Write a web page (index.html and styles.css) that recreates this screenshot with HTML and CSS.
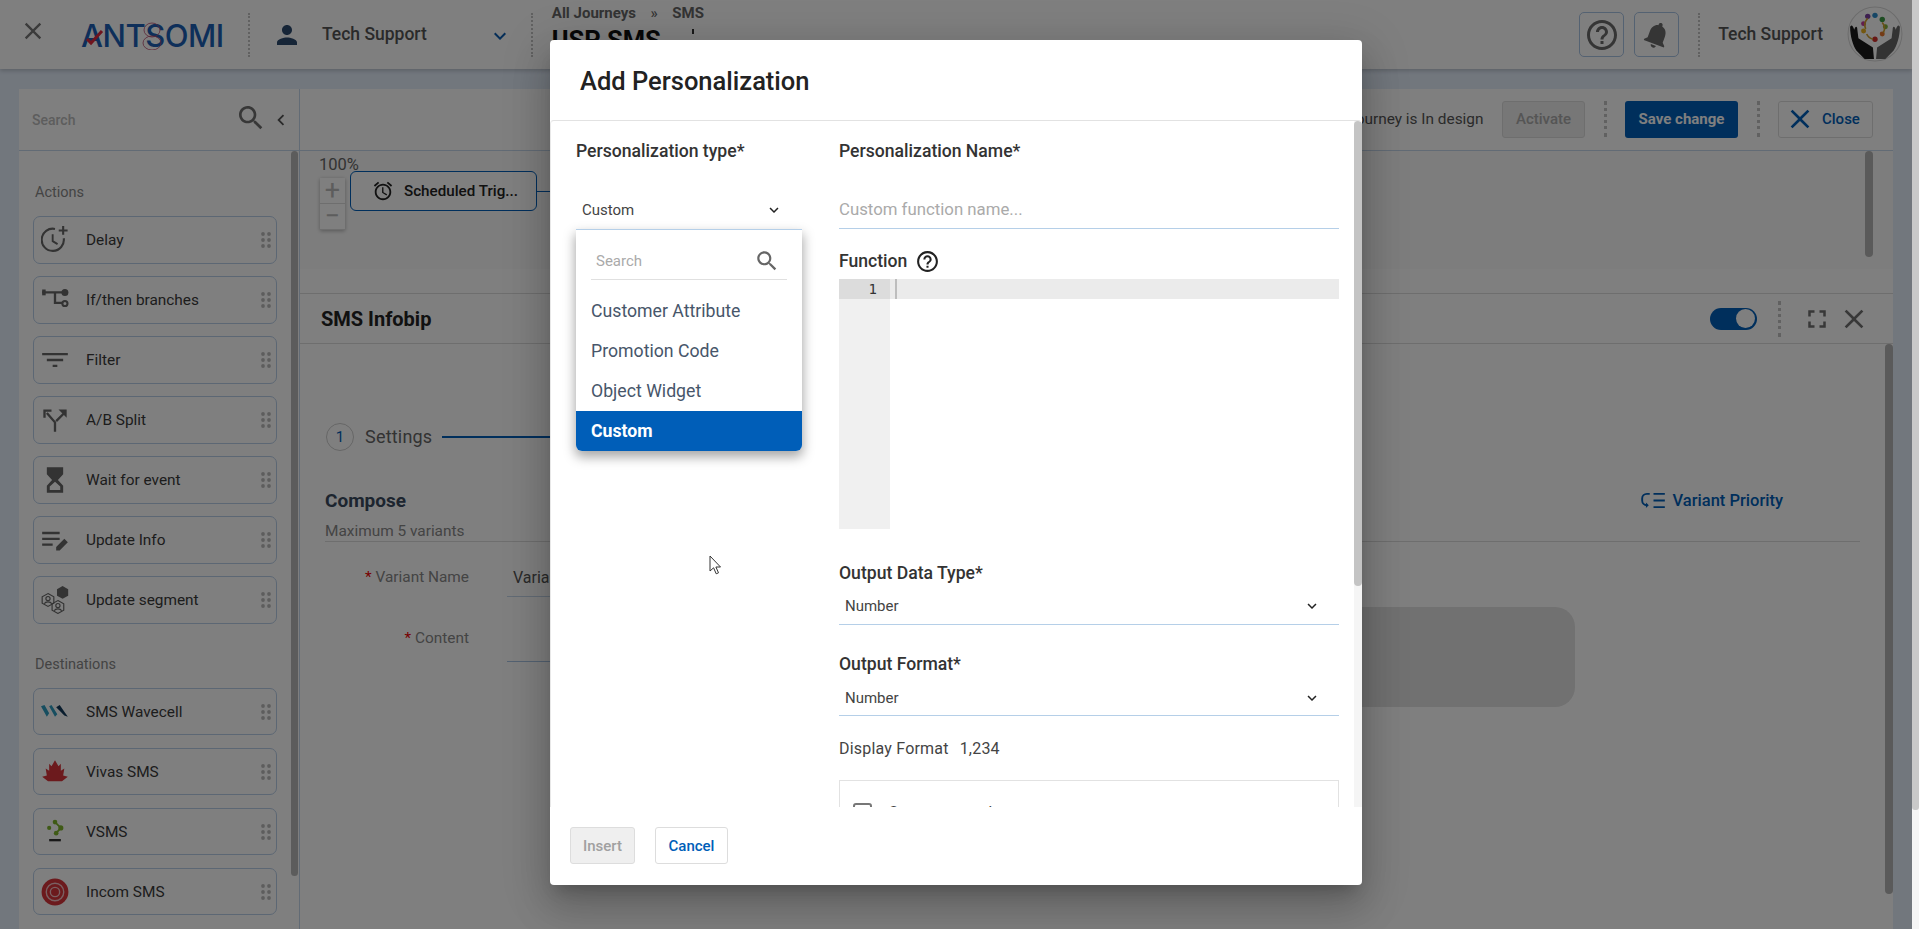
FILE: index.html
```html
<!DOCTYPE html>
<html lang="en">
<head>
  <meta charset="UTF-8" />
  <meta name="viewport" content="width=device-width, initial-scale=1.0" />
  <title>Add Personalization</title>
  <link rel="stylesheet" href="styles.css">
</head>
<body>
  <svg class="defs" aria-hidden="true">
    <symbol id="i-close" viewBox="0 0 24 24"><path d="M19 6.41L17.59 5 12 10.59 6.41 5 5 6.41 10.59 12 5 17.59 6.41 19 12 13.41 17.59 19 19 17.59 13.41 12z"/></symbol>
    <symbol id="i-chevron" viewBox="0 0 24 24"><path d="M16.59 8.59L12 13.17 7.41 8.59 6 10l6 6 6-6z"/></symbol>
    <symbol id="i-search" viewBox="0 0 24 24"><path d="M15.5 14h-.79l-.28-.27C15.41 12.59 16 11.11 16 9.5 16 5.91 13.09 3 9.5 3S3 5.91 3 9.5 5.91 16 9.5 16c1.61 0 3.09-.59 4.23-1.57l.27.28v.79l5 4.99L20.49 19l-4.99-5zm-6 0C7.01 14 5 11.99 5 9.5S7.01 5 9.5 5 14 7.01 14 9.5 11.99 14 9.5 14z"/></symbol>
    <symbol id="i-help" viewBox="0 0 24 24"><path d="M11 18h2v-2h-2v2zm1-16C6.48 2 2 6.48 2 12s4.48 10 10 10 10-4.48 10-10S17.52 2 12 2zm0 18c-4.41 0-8-3.59-8-8s3.59-8 8-8 8 3.59 8 8-3.59 8-8 8zm0-14c-2.21 0-4 1.79-4 4h2c0-1.1.9-2 2-2s2 .9 2 2c0 2-3 1.75-3 5h2c0-2.25 3-2.5 3-5 0-2.21-1.79-4-4-4z"/></symbol>
    <symbol id="i-grip" viewBox="0 0 10 16"><circle cx="2" cy="2" r="1.9"/><circle cx="8" cy="2" r="1.9"/><circle cx="2" cy="8" r="1.9"/><circle cx="8" cy="8" r="1.9"/><circle cx="2" cy="14" r="1.9"/><circle cx="8" cy="14" r="1.9"/></symbol>
  </svg>

  <div class="page">
    <div class="app">
      <header class="topbar">
        <svg class="top-close"><use href="#i-close"/></svg>
        <div class="logo">
          <span class="logo-word">ANTSOMI</span>
          <svg class="logo-mark" viewBox="0 0 142 28">
            <path d="M6 17l4 4 11-12" fill="none" stroke="#e0283c" stroke-width="3"/>
            <ellipse cx="71" cy="8" rx="8" ry="7" fill="none" stroke="#b84a6c" stroke-width="0.8"/>
            <ellipse cx="71" cy="21" rx="9" ry="7" fill="none" stroke="#b84a6c" stroke-width="0.8"/>
          </svg>
        </div>
        <div class="dots dots-first"></div>
        <svg class="person" viewBox="0 0 24 24"><path d="M12 12c2.21 0 4-1.79 4-4s-1.79-4-4-4-4 1.79-4 4 1.79 4 4 4zm0 2c-2.67 0-8 1.34-8 4v2h16v-2c0-2.66-5.33-4-8-4z"/></svg>
        <span class="account">Tech Support</span>
        <svg class="account-arrow"><use href="#i-chevron"/></svg>
        <div class="dots dots-second"></div>
        <div class="crumbs">
          <div class="crumb-line"><span>All Journeys</span><span class="crumb-sep">»</span><span>SMS</span></div>
          <div class="journey-name">USP SMS<span class="journey-tick"></span></div>
        </div>
        <div class="top-right">
          <button class="round-btn"><svg class="help-big"><use href="#i-help"/></svg></button>
          <button class="round-btn">
            <svg class="bell" viewBox="0 0 24 24"><path transform="rotate(20 12 12)" d="M12 22c1.1 0 2-.9 2-2h-4c0 1.1.9 2 2 2zm6-6v-5c0-3.07-1.63-5.64-4.5-6.32V4c0-.83-.67-1.5-1.5-1.5s-1.5.67-1.5 1.5v.68C7.64 5.36 6 7.92 6 11v5l-2 2v1h16v-1l-2-2z"/></svg>
          </button>
          <div class="dots dots-third"></div>
          <span class="account account-right">Tech Support</span>
          <svg class="avatar" viewBox="0 0 54 54">
            <circle cx="27" cy="27" r="26" fill="#fff" stroke="#d8d8d8"/>
            <circle cx="27" cy="9" r="2.6" fill="#2d8ccb"/>
            <circle cx="20" cy="10" r="2.6" fill="#7a3fa0"/>
            <circle cx="34" cy="13" r="2.6" fill="#3d9a46"/>
            <circle cx="37" cy="20" r="2.4" fill="#7eb23c"/>
            <circle cx="16" cy="17" r="2.4" fill="#c33c9c"/>
            <circle cx="16" cy="24" r="2.4" fill="#e8b020"/>
            <circle cx="34" cy="27" r="2.4" fill="#e8762c"/>
            <circle cx="27" cy="32" r="2.6" fill="#d0302c"/>
            <path d="M20 12a9 9 0 0 0 -2 10M34 16a9 9 0 0 1 1 10M19 27a9 9 0 0 0 6 5" fill="none" stroke="#d0a030" stroke-width="1.6"/>
            <path d="M3 20c2-3 3 0 4 3 1-4 3-4 3 0l1 8 14 9 1 11-9 0-8-8C6 38 3 30 3 20z" fill="#1a1a1a"/>
            <path d="M51 20c-2-3-3 0-4 3-1-4-3-4-3 0l-1 8-14 9-1 11 9 0 8-8C48 38 51 30 51 20z" fill="#666"/>
          </svg>
        </div>
      </header>

      <main class="board">
        <aside class="sidebar">
          <div class="side-search">
            <span class="side-search-text">Search</span>
            <svg class="side-search-icon"><use href="#i-search"/></svg>
            <svg class="side-collapse" viewBox="0 0 24 24"><path d="M15.41 7.41L14 6l-6 6 6 6 1.41-1.41L10.83 12z"/></svg>
          </div>
          <div class="side-body">
            <div class="side-list">
              <div class="side-heading">Actions</div>
              <div class="node-item">
                <svg class="node-icon" viewBox="0 0 24 24"><path d="M19.500 10.500a9.500 9.500 0 1 1-7.500-8" fill="none" stroke-width="1.800"/><path d="M10 7v6l4.200 2.500" fill="none" stroke-width="1.600"/><path d="M19 0v7.500M15.200 3.800h7.600" fill="none" stroke-width="1.800"/></svg>
                <span>Delay</span><svg class="grip"><use href="#i-grip"/></svg>
              </div>
              <div class="node-item">
                <svg class="node-icon" viewBox="0 0 24 24"><path d="M1 5.500h20M12 6v8.500h6" fill="none" stroke-width="2"/><path d="M1 3h3v5H1z"/><circle cx="20.500" cy="5.500" r="3"/><circle cx="20.500" cy="15" r="2.200" fill="none" stroke-width="1.800"/></svg>
                <span>If/then branches</span><svg class="grip"><use href="#i-grip"/></svg>
              </div>
              <div class="node-item">
                <svg class="node-icon" viewBox="0 0 24 24"><path d="M10 18h4v-2h-4v2zM1 6v2h22V6H1zm4 7h14v-2H5v2z"/></svg>
                <span>Filter</span><svg class="grip"><use href="#i-grip"/></svg>
              </div>
              <div class="node-item">
                <svg class="node-icon" viewBox="0 0 24 24"><path d="M12 22v-8L5 6M13 13l7-7" fill="none" stroke-width="2"/><path d="M2 3h7v2H4v5H2zM22 3h-7l7 7z"/></svg>
                <span>A/B Split</span><svg class="grip"><use href="#i-grip"/></svg>
              </div>
              <div class="node-item">
                <svg class="node-icon" viewBox="0 0 24 24"><path d="M5 1v6h.01L5 7.010 9.500 12 5 17v6h14v-6l-4.500-5L19 7.010 19 7V1H5zm11.500 16.500V20.500h-9v-3l4.500-4 4.500 4z"/></svg>
                <span>Wait for event</span><svg class="grip"><use href="#i-grip"/></svg>
              </div>
              <div class="node-item">
                <svg class="node-icon" viewBox="0 0 24 24"><path d="M1 5h15v2H1zM1 10h15v2H1zM1 15h9v2H1zM13 21v-3l7-7 3 3-7 7z"/></svg>
                <span>Update Info</span><svg class="grip"><use href="#i-grip"/></svg>
              </div>
              <div class="node-item node-last">
                <svg class="node-icon" viewBox="0 0 24 24"><path d="M18.500 0l4.800 2.800v5.600L18.500 11l-4.800-2.600V2.800z"/><path d="M6 6.500l5 2.800v5.400L6 17.500l-5-2.800V9.300z" fill="none" stroke-width="1"/><path d="M14.500 12.500l5 2.800v5.400l-5 2.800-5-2.800v-5.400z" fill="none" stroke-width="1"/><circle cx="6" cy="10.800" r="1.800" fill="none" stroke-width="1"/><path d="M2.800 15.200c1-2.200 5.400-2.200 6.400 0" fill="none" stroke-width="1"/><circle cx="14.500" cy="16.800" r="1.800" fill="none" stroke-width="1"/><path d="M11.300 21.200c1-2.200 5.400-2.200 6.400 0" fill="none" stroke-width="1"/></svg>
                <span>Update segment</span><svg class="grip"><use href="#i-grip"/></svg>
              </div>

              <div class="side-heading">Destinations</div>
              <div class="node-item dest-item">
                <svg class="node-icon" viewBox="0 0 24 24"><path d="M0 7l3-1 4 7-2 3zM7 7l2-1 5 8-2 2z" fill="#2f9dc0" stroke="none"/><path d="M13 8l3-2 7 10-3-1z" fill="#123a5c" stroke="none"/></svg>
                <span>SMS Wavecell</span><svg class="grip"><use href="#i-grip"/></svg>
              </div>
              <div class="node-item dest-item">
                <svg class="node-icon" viewBox="0 0 24 24"><path d="M12 2l3 5 2-2 0 6 3-2-1 6 4 1-5 4H6l-5-4 4-1-1-6 3 2 0-6 2 2z" fill="#d8343a" stroke="none"/><path d="M4 21c5-2 11-2 16 0" fill="none" stroke="#d8343a"/></svg>
                <span>Vivas SMS</span><svg class="grip"><use href="#i-grip"/></svg>
              </div>
              <div class="node-item dest-item">
                <svg class="node-icon" viewBox="0 0 24 24"><path d="M12 3.500L17 8.500 13 13" fill="none" stroke="#7eb42c" stroke-width="1.500"/><g fill="#7eb42c" stroke="none"><circle cx="12" cy="3.500" r="2"/><circle cx="17" cy="8.500" r="2.200"/><circle cx="7" cy="8.500" r="1.800"/><circle cx="13" cy="13" r="2"/><rect x="7" y="18" width="10" height="2" fill="#333"/></g></svg>
                <span>VSMS</span><svg class="grip"><use href="#i-grip"/></svg>
              </div>
              <div class="node-item dest-item">
                <svg class="node-icon" viewBox="0 0 24 24"><circle cx="12" cy="12" r="11.500" fill="#d8343a" stroke="none"/><circle cx="12" cy="12" r="7.500" fill="none" stroke="#f4c0c4" stroke-width="1.200"/><circle cx="12" cy="12" r="4" fill="none" stroke="#f4c0c4" stroke-width="1.200"/></svg>
                <span>Incom SMS</span><svg class="grip"><use href="#i-grip"/></svg>
              </div>
            </div>
            <div class="side-thumb"></div>
          </div>
        </aside>

        <section class="work">
          <div class="toolbar">
            <span class="journey-status">Journey is In design</span>
            <button class="tool-btn btn-off">Activate</button>
            <div class="dots dots-tool"></div>
            <button class="tool-btn btn-save">Save change</button>
            <div class="dots dots-tool"></div>
            <button class="tool-btn btn-close"><svg class="close-x"><use href="#i-close"/></svg>Close</button>
          </div>

          <div class="canvas">
            <span class="zoom-value">100%</span>
            <div class="zoom-box">
              <div class="zoom-cell">+</div>
              <div class="zoom-cell">−</div>
            </div>
            <div class="flow-node">
              <svg class="alarm" viewBox="0 0 24 24"><path d="M22 5.720l-4.600-3.860-1.290 1.530 4.600 3.860L22 5.720zM7.880 3.390L6.600 1.860 2 5.710l1.290 1.530 4.590-3.850zM12.500 8H11v6l4.750 2.850.75-1.230-4-2.370V8zM12 4c-4.970 0-9 4.030-9 9s4.020 9 9 9c4.970 0 9-4.030 9-9s-4.030-9-9-9zm0 16c-3.870 0-7-3.130-7-7s3.130-7 7-7 7 3.130 7 7-3.130 7-7 7z"/></svg>
              <span>Scheduled Trig...</span>
            </div>
            <div class="flow-link"></div>
            <div class="canvas-thumb"></div>
          </div>

          <div class="section-gap"></div>

          <div class="detail-head">
            <span class="detail-title">SMS Infobip</span>
            <div class="switch"><div class="switch-knob"></div></div>
            <div class="dots dots-detail"></div>
            <svg class="detail-icon" viewBox="0 0 24 24"><path d="M7 14H5v5h5v-2H7v-3zm-2-4h2V7h3V5H5v5zm12 7h-3v2h5v-5h-2v3zM14 5v2h3v3h2V5h-5z"/></svg>
            <svg class="detail-icon detail-x"><use href="#i-close"/></svg>
          </div>

          <div class="detail-wrap">
            <div class="detail-body">
              <div class="stepper">
                <span class="step-num">1</span>
                <span class="step-name">Settings</span>
                <div class="step-line"></div>
              </div>
              <div class="compose-row">
                <span class="compose-title">Compose</span>
                <span class="priority">
                  <svg class="priority-icon" viewBox="0 0 26 18"><path d="M9 2H6a5 5 0 0 0-5 5v2a5 5 0 0 0 5 5" fill="none" stroke="#005eb8" stroke-width="2"/><path d="M5 11v6l3-3z" fill="#005eb8"/><path d="M13 2h12M13 9h12M13 16h12" stroke="#005eb8" stroke-width="2"/></svg>
                  Variant Priority
                </span>
              </div>
              <div class="compose-note">Maximum 5 variants</div>
              <div class="compose-form">
                <div class="form-fields">
                  <div class="form-row">
                    <label class="form-label"><span class="req">*</span> Variant Name</label>
                    <div class="form-input">Variant 1</div>
                  </div>
                  <div class="form-row form-row-content">
                    <label class="form-label"><span class="req">*</span> Content</label>
                    <div class="form-input form-input-tall"></div>
                  </div>
                </div>
                <div class="preview"></div>
              </div>
            </div>
            <div class="detail-thumb"></div>
          </div>
        </section>
      </main>
    </div>

    <div class="backdrop"></div>

    <div class="modal">
      <div class="modal-head">Add Personalization</div>
      <div class="modal-body">
        <div class="col-type">
          <div class="field-label">Personalization type*</div>
          <div class="select select-type">
            <span>Custom</span>
            <svg class="select-arrow"><use href="#i-chevron"/></svg>
          </div>
          <div class="dropdown">
            <div class="drop-search">
              <span>Search</span>
              <svg class="drop-search-icon"><use href="#i-search"/></svg>
            </div>
            <div class="drop-list">
              <div class="drop-item">Customer Attribute</div>
              <div class="drop-item">Promotion Code</div>
              <div class="drop-item">Object Widget</div>
              <div class="drop-item drop-active">Custom</div>
            </div>
          </div>
        </div>

        <div class="col-form">
          <div class="field-label">Personalization Name*</div>
          <div class="name-input">Custom function name...</div>
          <div class="function-label">
            <span class="field-label">Function</span>
            <svg class="help-small"><use href="#i-help"/></svg>
          </div>
          <div class="editor">
            <div class="gutter"><div class="gutter-line">1</div></div>
            <div class="code"><div class="code-line"><div class="caret"></div></div></div>
          </div>
          <div class="field-label label-output">Output Data Type*</div>
          <div class="select select-output">
            <span>Number</span>
            <svg class="select-arrow"><use href="#i-chevron"/></svg>
          </div>
          <div class="field-label label-format">Output Format*</div>
          <div class="select select-format">
            <span>Number</span>
            <svg class="select-arrow"><use href="#i-chevron"/></svg>
          </div>
          <div class="display-format"><span>Display Format</span><span>1,234</span></div>
          <div class="format-box">
            <div class="check"></div>
            <span>Compact number</span>
          </div>
        </div>

        <div class="modal-scroll"><div class="modal-thumb"></div></div>
      </div>
      <div class="modal-foot">
        <button class="foot-btn foot-insert">Insert</button>
        <button class="foot-btn foot-cancel">Cancel</button>
      </div>
    </div>

    <svg class="pointer" viewBox="0 0 12 20"><path d="M1 1v15l3.600-3.200 2.600 6 2.300-1-2.600-5.800h4.600z" fill="#fff" stroke="#333" stroke-width="1"/></svg>
  </div>

  <div class="page-scroll"><div class="page-thumb"></div></div>
</body>
</html>
```

FILE: styles.css
```css
* {
  box-sizing: border-box;
}
html, body {
  margin: 0;
  height: 929px;
  overflow: hidden;
}
body {
  display: flex;
  font-family: Roboto, "Liberation Sans", sans-serif;
  font-size: 15.4px;
  color: #333;
  background: #fff;
}
button {
  font-family: inherit;
}
.defs {
  position: absolute;
  width: 0;
  height: 0;
}
.page {
  position: relative;
  width: 1912px;
  height: 929px;
  overflow: hidden;
}
.app {
  height: 929px;
  background: #e4eefb;
}
.backdrop {
  position: absolute;
  inset: 0;
  background: rgba(0, 0, 0, 0.5);
}

/* page scrollbar is not covered by the backdrop */
.page-scroll {
  width: 7px;
  height: 929px;
  background: #f5f5f5;
}
.page-thumb {
  height: 810px;
  background: #c9c9c9;
  border-radius: 0 0 3px 3px;
}

/* top bar */
.topbar {
  display: flex;
  align-items: center;
  height: 69px;
  background: #fff;
  box-shadow: 0 2px 4px rgba(0, 0, 0, 0.18);
  position: relative;
}
.top-close {
  width: 28px;
  height: 28px;
  margin: 0 0 7px 19px;
  fill: #777;
}
.logo {
  position: relative;
  width: 143px;
  height: 28px;
  margin: 2px 0 0 34px;
}
.logo-word {
  display: block;
  font-family: Inter, Roboto, sans-serif;
  font-size: 31px;
  font-weight: 500;
  line-height: 28px;
  letter-spacing: -0.5px;
  color: #1d5fb4;
  white-space: nowrap;
}
.logo-mark {
  position: absolute;
  top: 0;
  left: 0;
  width: 142px;
  height: 28px;
}
.dots {
  border-left: 2px dotted #c2c2c2;
}
.dots-first {
  height: 44px;
  margin-left: 24px;
}
.person {
  width: 30px;
  height: 30px;
  margin-left: 22px;
  fill: #2c4a6e;
}
.account {
  margin: 0 0 2px 20px;
  font-size: 17.5px;
  font-weight: 500;
  color: #555;
}
.account-arrow {
  width: 24px;
  height: 24px;
  margin: 3px 0 0 61px;
  fill: #0a5cb0;
}
.dots-second {
  height: 44px;
  margin-left: 19px;
}
.crumbs {
  margin: 4px 0 0 19px;
  align-self: flex-start;
}
.crumb-line {
  display: flex;
  font-size: 15px;
  font-weight: 700;
  line-height: 18px;
  color: #666;
}
.crumb-sep {
  margin: 0 14.5px;
  font-weight: 500;
}
.journey-name {
  display: flex;
  margin-top: 3px;
  font-size: 25.5px;
  font-weight: 700;
  line-height: 30px;
  color: #111;
}
.journey-tick {
  width: 2px;
  height: 5px;
  margin: 4px 0 0 31px;
  background: #333;
}
.top-right {
  display: flex;
  align-items: center;
  margin-left: auto;
}
.round-btn {
  display: flex;
  align-items: center;
  justify-content: center;
  width: 45px;
  height: 45px;
  margin-right: 10px;
  padding: 0;
  background: #fff;
  border: 1px solid #a9c4e4;
  border-radius: 5px;
}
.help-big {
  width: 36px;
  height: 36px;
  fill: #6a6a6a;
}
.bell {
  width: 32px;
  height: 32px;
  fill: #6a6a6a;
}
.dots-third {
  height: 44px;
  margin-left: 9px;
}
.account-right {
  margin-left: 18px;
}
.avatar {
  width: 56px;
  height: 56px;
  margin: 0 9px 1px 24px;
}

/* board */
.board {
  display: flex;
  height: 840px;
  margin: 20px 19px 0;
  background: #fff;
}
.sidebar {
  width: 281px;
  flex: none;
  border-right: 1px solid #c5d6ea;
}
.side-search {
  display: flex;
  align-items: center;
  height: 62px;
  padding: 0 0 0 13px;
  border-bottom: 1px solid #c5d6ea;
}
.side-search-text {
  flex: 1;
  font-size: 14px;
  font-weight: 500;
  color: #bbb;
}
.side-search-icon {
  width: 32px;
  height: 32px;
  margin-bottom: 4px;
  fill: #6e6e6e;
}
.side-collapse {
  width: 22px;
  height: 22px;
  margin: 0 7px 0 3px;
  fill: #555;
}
.side-body {
  display: flex;
}
.side-list {
  width: 272px;
  height: 778px;
  padding: 32px 0 0 14px;
  overflow: hidden;
}
.side-heading {
  height: 20px;
  margin-bottom: 13px;
  padding-left: 2px;
  line-height: 20px;
  font-size: 14.5px;
  color: #888;
}
.node-item {
  display: flex;
  align-items: center;
  width: 244px;
  height: 48px;
  margin-bottom: 12px;
  padding: 0 5px 0 7px;
  border: 1px solid #b9cee8;
  border-radius: 7px;
  color: #3a3a3a;
}
.node-item span {
  flex: 1;
}
.node-last {
  margin-bottom: 31px;
}
.dest-item {
  height: 47px;
  margin-bottom: 13px;
}
.node-icon {
  width: 28px;
  height: 28px;
  margin-right: 17px;
  fill: #666;
  stroke: #666;
  stroke-width: 0;
}
.grip {
  width: 10px;
  height: 16px;
  fill: #bbb;
}
.side-thumb {
  width: 7px;
  height: 725px;
  background: #b8b8b8;
  border-radius: 4px;
}

/* work area */
.work {
  flex: 1;
  min-width: 0;
}
.toolbar {
  display: flex;
  align-items: center;
  justify-content: flex-end;
  height: 62px;
  padding: 0 20px 1px 0;
  gap: 18.5px;
  border-bottom: 1px solid #c5d6ea;
}
.journey-status {
  color: #555;
}
.tool-btn {
  height: 37px;
  padding: 0;
  border-radius: 3px;
  font-size: 15px;
  font-weight: 500;
}
.btn-off {
  width: 83px;
  background: #eee;
  border: 1px solid #ddd;
  color: #aaa;
}
.btn-save {
  width: 113px;
  background: #005eb8;
  border: 0;
  font-weight: 700;
  color: #fff;
}
.btn-close {
  display: flex;
  align-items: center;
  width: 95px;
  padding-left: 5px;
  background: #fff;
  border: 1px solid #ddd;
  color: #005eb8;
}
.close-x {
  width: 32px;
  height: 32px;
  margin-right: 6px;
  fill: #005eb8;
}
.dots-tool {
  height: 36px;
  border-left-width: 3px;
}
.canvas {
  position: relative;
  height: 118px;
  background: #fbfbfb;
}
.zoom-value {
  position: absolute;
  top: 4px;
  left: 19px;
  font-size: 16.5px;
  color: #666;
}
.zoom-box {
  position: absolute;
  top: 27px;
  left: 20px;
  width: 25px;
  background: #fff;
  box-shadow: 0 1px 4px rgba(0, 0, 0, 0.3);
}
.zoom-cell {
  height: 26px;
  border-bottom: 1px solid #ddd;
  font-size: 27px;
  line-height: 25px;
  text-align: center;
  color: #bbb;
}
.flow-node {
  position: absolute;
  top: 20px;
  left: 50px;
  display: flex;
  align-items: center;
  width: 187px;
  height: 40px;
  padding-left: 21px;
  background: #fff;
  border: 1px solid #005eb8;
  border-radius: 6px;
  font-size: 15.2px;
  font-weight: 500;
  color: #222;
}
.alarm {
  width: 22px;
  height: 22px;
  margin-right: 10px;
  fill: #222;
}
.flow-link {
  position: absolute;
  top: 40px;
  left: 237px;
  width: 60px;
  border-top: 1px solid #005eb8;
}
.canvas-thumb {
  position: absolute;
  top: 0;
  left: 1565px;
  width: 8px;
  height: 106px;
  background: #b4b4b4;
  border-radius: 4px;
}
.section-gap {
  height: 24px;
  background: #fff;
}
.detail-head {
  display: flex;
  align-items: center;
  height: 51px;
  padding-left: 21px;
  border-top: 1px solid #ddd;
  border-bottom: 1px solid #ddd;
}
.detail-title {
  flex: 1;
  font-size: 20px;
  font-weight: 700;
  color: #222;
}
.switch {
  display: flex;
  justify-content: flex-end;
  align-items: center;
  width: 47px;
  height: 22px;
  padding-right: 2px;
  background: #005eb8;
  border-radius: 11px;
}
.switch-knob {
  width: 19px;
  height: 19px;
  background: #fff;
  border-radius: 50%;
}
.dots-detail {
  height: 36px;
  margin-left: 21px;
  border-left-width: 3px;
}
.detail-icon {
  width: 30px;
  height: 30px;
  margin-left: 21px;
  fill: #707070;
}
.detail-x {
  width: 32px;
  height: 32px;
  margin: 0 23px 0 6px;
}
.detail-wrap {
  display: flex;
  height: 550px;
}
.detail-body {
  flex: 1;
  min-width: 0;
  padding: 78px 0 0 25px;
}
.detail-thumb {
  width: 8px;
  height: 550px;
  background: #b4b4b4;
  border-radius: 4px;
}
.stepper {
  display: flex;
  align-items: center;
  height: 29px;
}
.step-num {
  width: 28px;
  height: 28px;
  margin-left: 1px;
  border: 1px solid #ccc;
  border-radius: 50%;
  line-height: 26px;
  font-size: 15px;
  text-align: center;
  color: #005eb8;
}
.step-name {
  margin: 0 10px 0 11px;
  font-size: 18px;
  letter-spacing: 0.2px;
  color: #666;
}
.step-line {
  width: 300px;
  border-top: 2px solid #005eb8;
}
.compose-row {
  display: flex;
  justify-content: space-between;
  align-items: center;
  height: 24px;
  margin-top: 37px;
  padding-right: 102px;
}
.compose-title {
  font-size: 19px;
  font-weight: 700;
  color: #3a4a5e;
}
.priority {
  display: flex;
  align-items: center;
  font-size: 16.5px;
  font-weight: 500;
  color: #005eb8;
}
.priority-icon {
  width: 25px;
  height: 17px;
  margin-right: 7px;
}
.compose-note {
  height: 30px;
  margin-right: 25px;
  padding-top: 10px;
  border-bottom: 1px solid #ddd;
  line-height: 19px;
  color: #888;
}
.compose-form {
  display: flex;
}
.form-fields {
  width: 800px;
  padding-top: 19px;
}
.form-row {
  display: flex;
}
.form-row-content {
  margin-top: 25px;
}
.form-label {
  width: 144px;
  height: 32px;
  line-height: 32px;
  text-align: right;
  color: #888;
}
.req {
  color: #e00;
}
.form-input {
  width: 600px;
  height: 36px;
  margin-left: 38px;
  padding: 7px 0 0 6px;
  border-bottom: 1px solid #c5d6ea;
  font-size: 16px;
  color: #555;
}
.form-input-tall {
  height: 40px;
  border-bottom-color: #a9c4e4;
}
.preview {
  width: 375px;
  height: 100px;
  margin: 65px 0 0 75px;
  background: #e2e2e2;
  border-radius: 20px;
}

/* modal */
.modal {
  position: absolute;
  top: 40px;
  left: 550px;
  display: flex;
  flex-direction: column;
  width: 812px;
  height: 845px;
  background: #fff;
  border-radius: 4px;
  box-shadow: 0 11px 15px -7px rgba(0, 0, 0, 0.2), 0 24px 38px 3px rgba(0, 0, 0, 0.14), 0 9px 46px 8px rgba(0, 0, 0, 0.12);
}
.modal-head {
  height: 80px;
  padding: 27px 0 0 30px;
  font-size: 25.5px;
  font-weight: 500;
  line-height: 28px;
  color: #222;
}
.modal-body {
  position: relative;
  display: flex;
  height: 687px;
  overflow: hidden;
  border-top: 1px solid #e2e2e2;
  border-left: 1px solid #e8e8e8;
  border-radius: 4px 4px 0 0;
}
.col-type {
  width: 226px;
  margin-left: 25px;
  padding-top: 20px;
}
.col-form {
  width: 500px;
  margin-left: 37px;
  padding-top: 20px;
}
.field-label {
  height: 20px;
  font-size: 17.6px;
  font-weight: 500;
  line-height: 20px;
  color: #333;
}
.select {
  position: relative;
  display: flex;
  align-items: center;
  justify-content: space-between;
  border-bottom: 1px solid #b5cfe8;
  font-size: 15px;
  color: #444;
}
.select-type {
  height: 39px;
  margin-top: 30px;
  padding: 0 19px 0 6px;
}
.select-output {
  height: 38px;
  margin-top: 4px;
  padding: 0 18px 0 6px;
}
.select-format {
  height: 36px;
  margin-top: 6px;
  padding: 0 18px 0 6px;
}
.select-arrow {
  width: 18px;
  height: 18px;
  fill: #222;
}
.dropdown {
  background: #fff;
  border-radius: 0 0 6px 6px;
  box-shadow: 0 5px 12px 1px rgba(0, 0, 0, 0.35);
}
.drop-search {
  display: flex;
  align-items: center;
  justify-content: space-between;
  height: 50px;
  margin: 0 15px;
  padding: 12px 7px 0 5px;
  border-bottom: 1px solid #e0e0e0;
  font-size: 15px;
  color: #aaa;
}
.drop-search-icon {
  width: 26px;
  height: 26px;
  fill: #666;
}
.drop-list {
  margin-top: 11px;
}
.drop-item {
  height: 40px;
  padding-left: 15px;
  font-size: 17.7px;
  line-height: 40px;
  color: #47566a;
}
.drop-active {
  background: #005eb8;
  border-radius: 0 0 6px 6px;
  font-weight: 700;
  color: #fff;
}
.name-input {
  height: 38px;
  margin-top: 30px;
  border-bottom: 1px solid #b5cfe8;
  font-size: 16.8px;
  line-height: 36px;
  color: #aaa;
}
.function-label {
  display: flex;
  align-items: center;
  height: 22px;
  margin-top: 21px;
}
.help-small {
  width: 25px;
  height: 25px;
  margin-left: 8px;
  fill: #222;
}
.editor {
  display: flex;
  height: 250px;
  margin-top: 7px;
}
.gutter {
  width: 51px;
  background: #f0f0f0;
}
.gutter-line {
  height: 20px;
  padding-right: 13px;
  background: #dcdcdc;
  font-family: "DejaVu Sans Mono", monospace;
  font-size: 14px;
  line-height: 20px;
  text-align: right;
  color: #333;
}
.code {
  flex: 1;
}
.code-line {
  height: 20px;
  padding-left: 5px;
  background: #ebebeb;
}
.caret {
  width: 2px;
  height: 20px;
  background: #bdbdbd;
}
.label-output {
  margin-top: 34px;
}
.label-format {
  margin-top: 29px;
}
.display-format {
  display: flex;
  gap: 11px;
  height: 20px;
  margin-top: 23px;
  font-size: 16px;
  line-height: 20px;
  letter-spacing: 0.2px;
  color: #444;
}
.format-box {
  display: flex;
  height: 60px;
  margin-top: 21px;
  padding: 22px 0 0 13px;
  border: 1px solid #e2e2e2;
  font-size: 16px;
  color: #444;
}
.check {
  width: 19px;
  height: 19px;
  margin-right: 16px;
  border: 2px solid #777;
  border-radius: 3px;
}
.modal-scroll {
  position: absolute;
  top: 0;
  right: 0;
  width: 8px;
  height: 100%;
  background: #f5f5f5;
}
.modal-thumb {
  height: 465px;
  background: #c4c4c4;
  border-radius: 4px;
}
.modal-foot {
  display: flex;
  gap: 20px;
  padding: 20px 0 0 20px;
}
.foot-btn {
  height: 37px;
  padding: 0;
  border: 1px solid #ddd;
  border-radius: 3px;
  font-size: 15px;
  font-weight: 500;
}
.foot-insert {
  width: 65px;
  background: #efefef;
  color: #a0a0a0;
}
.foot-cancel {
  width: 73px;
  background: #fff;
  color: #005eb8;
}

/* mouse pointer caught in the screenshot */
.pointer {
  position: absolute;
  top: 555px;
  left: 709px;
  width: 12px;
  height: 20px;
}
```
